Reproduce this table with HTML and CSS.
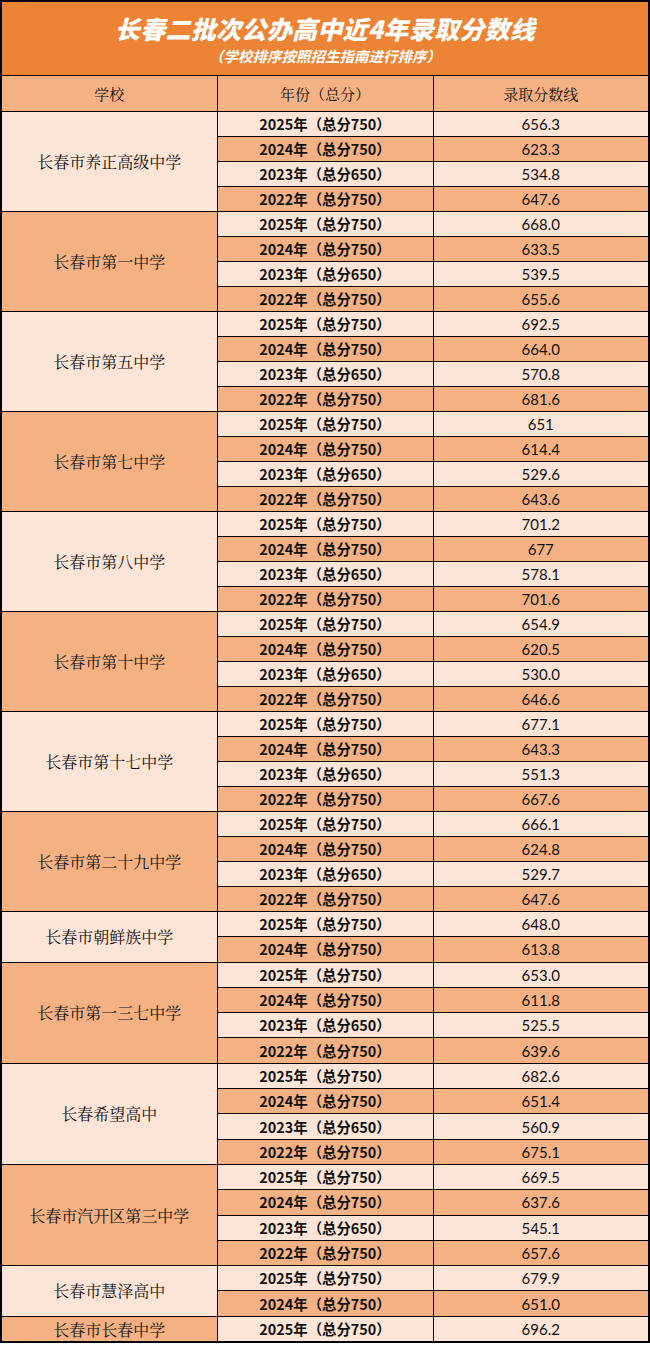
FILE: index.html
```html
<!DOCTYPE html>
<html lang="zh-CN">
<head>
<meta charset="utf-8">
<title>长春二批次公办高中近4年录取分数线</title>
<link rel="stylesheet" href="styles.css">
</head>
<body>
<div class="sheet">
  <div class="title">
    <div class="title-main">长春二批次公办高中近4年录取分数线</div>
    <div class="title-sub">（学校排序按照招生指南进行排序）</div>
  </div>
  <table class="scores">
    <colgroup><col class="c1"><col class="c2"><col class="c3"></colgroup>
    <thead>
      <tr class="head"><th>学校</th><th>年份（总分）</th><th>录取分数线</th></tr>
    </thead>
    <tbody>
      <tr><td rowspan="4" class="school light">长春市养正高级中学</td><td class="year light">2025年（总分750）</td><td class="score light">656.3</td></tr>
      <tr><td class="year dark">2024年（总分750）</td><td class="score dark">623.3</td></tr>
      <tr><td class="year light">2023年（总分650）</td><td class="score light">534.8</td></tr>
      <tr><td class="year dark">2022年（总分750）</td><td class="score dark">647.6</td></tr>

      <tr><td rowspan="4" class="school dark">长春市第一中学</td><td class="year light">2025年（总分750）</td><td class="score light">668.0</td></tr>
      <tr><td class="year dark">2024年（总分750）</td><td class="score dark">633.5</td></tr>
      <tr><td class="year light">2023年（总分650）</td><td class="score light">539.5</td></tr>
      <tr><td class="year dark">2022年（总分750）</td><td class="score dark">655.6</td></tr>

      <tr><td rowspan="4" class="school light">长春市第五中学</td><td class="year light">2025年（总分750）</td><td class="score light">692.5</td></tr>
      <tr><td class="year dark">2024年（总分750）</td><td class="score dark">664.0</td></tr>
      <tr><td class="year light">2023年（总分650）</td><td class="score light">570.8</td></tr>
      <tr><td class="year dark">2022年（总分750）</td><td class="score dark">681.6</td></tr>

      <tr><td rowspan="4" class="school dark">长春市第七中学</td><td class="year light">2025年（总分750）</td><td class="score light">651</td></tr>
      <tr><td class="year dark">2024年（总分750）</td><td class="score dark">614.4</td></tr>
      <tr><td class="year light">2023年（总分650）</td><td class="score light">529.6</td></tr>
      <tr><td class="year dark">2022年（总分750）</td><td class="score dark">643.6</td></tr>

      <tr><td rowspan="4" class="school light">长春市第八中学</td><td class="year light">2025年（总分750）</td><td class="score light">701.2</td></tr>
      <tr><td class="year dark">2024年（总分750）</td><td class="score dark">677</td></tr>
      <tr><td class="year light">2023年（总分650）</td><td class="score light">578.1</td></tr>
      <tr><td class="year dark">2022年（总分750）</td><td class="score dark">701.6</td></tr>

      <tr><td rowspan="4" class="school dark">长春市第十中学</td><td class="year light">2025年（总分750）</td><td class="score light">654.9</td></tr>
      <tr><td class="year dark">2024年（总分750）</td><td class="score dark">620.5</td></tr>
      <tr><td class="year light">2023年（总分650）</td><td class="score light">530.0</td></tr>
      <tr><td class="year dark">2022年（总分750）</td><td class="score dark">646.6</td></tr>

      <tr><td rowspan="4" class="school light">长春市第十七中学</td><td class="year light">2025年（总分750）</td><td class="score light">677.1</td></tr>
      <tr><td class="year dark">2024年（总分750）</td><td class="score dark">643.3</td></tr>
      <tr><td class="year light">2023年（总分650）</td><td class="score light">551.3</td></tr>
      <tr><td class="year dark">2022年（总分750）</td><td class="score dark">667.6</td></tr>

      <tr><td rowspan="4" class="school dark">长春市第二十九中学</td><td class="year light">2025年（总分750）</td><td class="score light">666.1</td></tr>
      <tr><td class="year dark">2024年（总分750）</td><td class="score dark">624.8</td></tr>
      <tr><td class="year light">2023年（总分650）</td><td class="score light">529.7</td></tr>
      <tr><td class="year dark">2022年（总分750）</td><td class="score dark">647.6</td></tr>

      <tr class="tall"><td rowspan="2" class="school light">长春市朝鲜族中学</td><td class="year light">2025年（总分750）</td><td class="score light">648.0</td></tr>
      <tr class="tall"><td class="year dark">2024年（总分750）</td><td class="score dark">613.8</td></tr>

      <tr class="tall"><td rowspan="4" class="school dark">长春市第一三七中学</td><td class="year light">2025年（总分750）</td><td class="score light">653.0</td></tr>
      <tr class="tall"><td class="year dark">2024年（总分750）</td><td class="score dark">611.8</td></tr>
      <tr class="tall"><td class="year light">2023年（总分650）</td><td class="score light">525.5</td></tr>
      <tr class="tall"><td class="year dark">2022年（总分750）</td><td class="score dark">639.6</td></tr>

      <tr class="tall"><td rowspan="4" class="school light">长春希望高中</td><td class="year light">2025年（总分750）</td><td class="score light">682.6</td></tr>
      <tr class="tall"><td class="year dark">2024年（总分750）</td><td class="score dark">651.4</td></tr>
      <tr class="tall"><td class="year light">2023年（总分650）</td><td class="score light">560.9</td></tr>
      <tr class="tall"><td class="year dark">2022年（总分750）</td><td class="score dark">675.1</td></tr>

      <tr class="tall"><td rowspan="4" class="school dark">长春市汽开区第三中学</td><td class="year light">2025年（总分750）</td><td class="score light">669.5</td></tr>
      <tr class="tall"><td class="year dark">2024年（总分750）</td><td class="score dark">637.6</td></tr>
      <tr class="tall"><td class="year light">2023年（总分650）</td><td class="score light">545.1</td></tr>
      <tr class="tall"><td class="year dark">2022年（总分750）</td><td class="score dark">657.6</td></tr>

      <tr class="tall"><td rowspan="2" class="school light">长春市慧泽高中</td><td class="year light">2025年（总分750）</td><td class="score light">679.9</td></tr>
      <tr class="tall"><td class="year dark">2024年（总分750）</td><td class="score dark">651.0</td></tr>

      <tr><td class="school dark">长春市长春中学</td><td class="year light">2025年（总分750）</td><td class="score light">696.2</td></tr>
    </tbody>
  </table>
</div>
</body>
</html>
```

FILE: styles.css
```css
html, body {
  margin: 0;
  padding: 0;
  background: #ffffff;
}

.sheet {
  width: 650px;
  box-sizing: border-box;
  border: 2px solid #000;
  background: #ffffff;
}

.title {
  height: 73px;
  border-bottom: 1px solid #000;
  background: #ed8335;
  color: #ffffff;
  text-align: center;
  font-family: "Noto Sans CJK SC", sans-serif;
  font-style: italic;
  font-weight: 900;
  box-sizing: content-box;
}

.title-main {
  padding-top: 9px;
  font-size: 25px;
  line-height: 34px;
  letter-spacing: 0.3px;
}

.title-sub {
  padding-top: 1px;
  font-size: 14.5px;
  line-height: 20px;
  font-weight: 700;
}

.scores {
  width: 646px;
  border-collapse: collapse;
  border-style: hidden;
  table-layout: fixed;
  color: #111;
}

.c1 { width: 215px; }
.c2 { width: 216px; }
.c3 { width: 215px; }

.scores th,
.scores td {
  border: 1px solid #000;
  padding: 0;
  text-align: center;
  vertical-align: middle;
}

.head th {
  height: 35px;
  background: #f4b183;
  font-family: "Noto Serif CJK SC", "Noto Sans CJK SC", serif;
  font-weight: 400;
  font-size: 15px;
}

.scores tbody tr {
  height: 25px;
}

.scores tbody tr.tall {
  height: 25.3px;
}

.light { background: #fce4d6; }
.dark { background: #f4b183; }

.school {
  font-family: "Noto Serif CJK SC", "Noto Sans CJK SC", serif;
  font-size: 16px;
  font-weight: 400;
}

.year {
  font-family: "Noto Sans CJK SC", sans-serif;
  font-weight: 700;
  font-size: 14.4px;
  line-height: 20px;
}

.score {
  font-family: Lato, "Noto Sans CJK SC", sans-serif;
  font-size: 15px;
  line-height: 20px;
}
```
